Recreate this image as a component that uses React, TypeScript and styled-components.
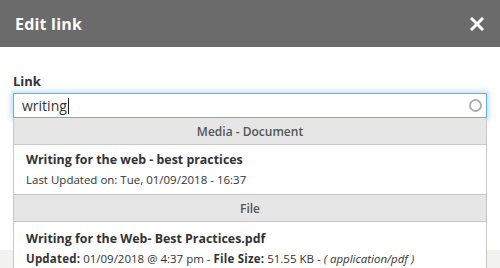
import React, { FC } from "react"
import styled, { createGlobalStyle } from "styled-components"

const GlobalStyle = createGlobalStyle`
html, body {
   margin: 0;
   padding: 0;
   background: #fff;
   font-family: "Open Sans", "DejaVu Sans", sans-serif;
   overflow: hidden;
}
`

const Dialog = styled.div`
width: 500px;
height: 268px;
background: #fff;
position: relative;
overflow: hidden;
`

const Header = styled.div`
height: 47px;
background: #6b6b6b;
display: flex;
align-items: center;
justify-content: space-between;
padding: 0 15px;
box-sizing: border-box;
`

const Title = styled.h1`
margin: 0;
font-size: 16px;
font-weight: 700;
color: #fff;
letter-spacing: 0.2px;
`

const CloseButton = styled.button`
border: 0;
background: none;
padding: 0;
width: 16px;
height: 16px;
display: flex;
align-items: center;
justify-content: center;
cursor: pointer;
`

const Body = styled.div`
padding: 25px 13px 0;
`

const Label = styled.label`
display: block;
font-size: 13px;
font-weight: 700;
color: #333;
margin-bottom: 3px;
`

const Field = styled.div`
position: relative;
`

const Input = styled.div`
height: 25px;
box-sizing: border-box;
border: 1px solid #5fb3f2;
box-shadow: 0 0 5px 2px rgba(110, 190, 250, 0.45);
display: flex;
align-items: center;
padding: 0 4px 0 8px;
font-size: 14px;
color: #333;
`

const Caret = styled.span`
display: inline-block;
width: 1px;
height: 16px;
background: #222;
margin-left: 1px;
`

const Spinner = styled.div`
margin-left: auto;
width: 9px;
height: 9px;
border: 2px solid #b0b0b0;
border-radius: 50%;
`

const Menu = styled.div`
position: absolute;
left: 0;
right: 0;
top: 25px;
border: 1px solid #c8c8c8;
border-top: 0;
background: #fff;
z-index: 2;
`

const GroupHeader = styled.div`
height: 27px;
background: #e6e6e6;
border-bottom: 1px solid #c8c8c8;
display: flex;
align-items: center;
justify-content: center;
font-size: 12px;
color: #555;
font-weight: 600;
box-sizing: border-box;
`

const Item = styled.div<{ $last?: boolean }>`
padding: ${p => (p.$last ? "8px" : "6px")} 12px 8px;
height: ${p => (p.$last ? "auto" : "50px")};
box-sizing: border-box;
border-bottom: ${p => (p.$last ? "0" : "1px solid #c8c8c8")};
`

const ItemTitle = styled.div`
font-size: 12.4px;
font-weight: 700;
color: #333;
line-height: 18px;
`

const ItemMeta = styled.div`
font-size: 11.5px;
color: #333;
line-height: 18px;
margin-top: 2px;
b { font-weight: 700; letter-spacing: 0.2px; }
i { font-style: italic; }
`

const Backdrop = styled.div`
margin-top: 132px;
height: 20px;
background: #f2f2ef;
`

const CloseIcon: FC = () => (
   <svg width="14" height="14" viewBox="0 0 14 14">
      <path d="M2 2 L12 12 M12 2 L2 12" stroke="#fff" strokeWidth="3" strokeLinecap="square" />
   </svg>
)

export default function App() {
   return (
      <Dialog>
         <GlobalStyle />
         <Header>
            <Title>Edit link</Title>
            <CloseButton aria-label="Close"><CloseIcon /></CloseButton>
         </Header>
         <Body>
            <Label>Link</Label>
            <Field>
               <Input>
                  writing<Caret />
                  <Spinner />
               </Input>
               <Menu>
                  <GroupHeader>Media - Document</GroupHeader>
                  <Item>
                     <ItemTitle>Writing for the web - best practices</ItemTitle>
                     <ItemMeta>Last Updated on: Tue, 01/09/2018 - 16:37</ItemMeta>
                  </Item>
                  <GroupHeader>File</GroupHeader>
                  <Item $last>
                     <ItemTitle>Writing for the Web- Best Practices.pdf</ItemTitle>
                     <ItemMeta>
                        <b>Updated:</b> 01/09/2018 @ 4:37 pm - <b>File Size:</b> 51.55 KB - <i>( application/pdf )</i>
                     </ItemMeta>
                  </Item>
               </Menu>
            </Field>
         </Body>
         <Backdrop />
      </Dialog>
   )
}
